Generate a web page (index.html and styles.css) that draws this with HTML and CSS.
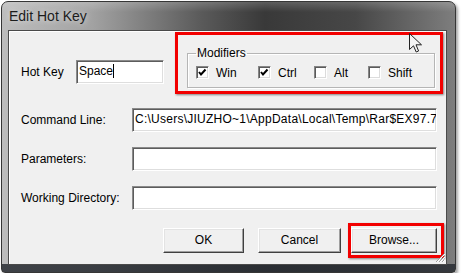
FILE: index.html
```html
<!DOCTYPE html>
<html lang="en">
<head>
  <meta charset="UTF-8">
  <meta name="viewport" content="width=device-width, initial-scale=1.0">
  <title>Edit Hot Key</title>
  <link rel="stylesheet" href="styles.css">
</head>
<body>
  <div class="window">
    <div class="titlebar">Edit Hot Key</div>
    <div class="client">
      <div class="top-row">
        <div class="hotkey-field">
          <label class="hotkey-label">Hot Key</label>
          <div class="field hotkey-input">Space<span class="caret"></span></div>
        </div>
        <div class="mark modifiers-mark">
          <fieldset class="modifiers">
            <legend>Modifiers</legend>
            <div class="check-row">
              <span class="check-item">
                <span class="box"><svg width="11" height="11" viewBox="0 0 11 11"><path d="M2 5 L4 7.5 L8.5 2.5" fill="none" stroke="#000" stroke-width="2"/></svg></span>Win
              </span>
              <span class="check-item">
                <span class="box"><svg width="11" height="11" viewBox="0 0 11 11"><path d="M2 5 L4 7.5 L8.5 2.5" fill="none" stroke="#000" stroke-width="2"/></svg></span>Ctrl
              </span>
              <span class="check-item"><span class="box"></span>Alt</span>
              <span class="check-item"><span class="box"></span>Shift</span>
            </div>
          </fieldset>
        </div>
      </div>

      <div class="fields">
        <label>Command Line:</label>
        <div class="field path">C:\Users\JIUZHO~1\AppData\Local\Temp\Rar$EX97.748\HotKeyP.exe</div>
        <label>Parameters:</label>
        <div class="field"></div>
        <label>Working Directory:</label>
        <div class="field"></div>
      </div>

      <div class="buttons">
        <div class="button ok-btn">OK</div>
        <div class="button cancel-btn">Cancel</div>
        <div class="mark browse-mark">
          <div class="button browse-btn">Browse...</div>
        </div>
      </div>

      <svg class="grip" width="10" height="10" viewBox="0 0 10 10">
        <path d="M9 1 L1 9 M9 4 L4 9 M9 7 L7 9" stroke="#a0a0a0" stroke-width="1"/>
        <path d="M10 1 L2 9 M10 4 L5 9 M10 7 L8 9" stroke="#fff" stroke-width="1"/>
      </svg>
    </div>
  </div>

  <svg class="cursor" width="14" height="21" viewBox="0 0 14 21">
    <path d="M0.5 0.5 L0.5 16.5 L4.5 12.8 L7.2 19 L9.6 18 L7 11.8 L12.5 11.8 Z" fill="#f4f4f4" stroke="#222" stroke-width="1" stroke-linejoin="round"/>
  </svg>
</body>
</html>
```

FILE: styles.css
```css
body {
  margin: 0;
  background: #fff;
  font-family: 'Liberation Sans', Arial, sans-serif;
  font-size: 12px;
  color: #000;
}

/* ---- window frame ---- */
.window {
  box-sizing: border-box;
  width: 455px;
  height: 272px;
  margin: 1px 0 0 1px;
  padding: 0 8px 7px 6px;
  border: 1px solid #363636;
  border-radius: 7px 7px 4px 4px;
  background:
    linear-gradient(to bottom, rgba(255,255,255,0.18), rgba(255,255,255,0) 10px),
    linear-gradient(to bottom, rgba(40,44,50,0) 262px, rgba(40,44,50,0.85) 262px),
    linear-gradient(to right, #bdbdbd, #a2a2a2 20%, #5a5a5a 44%, #393939 58%, #474747 78%, #7e7e7e 100%);
  box-shadow: 2px 2px 3px rgba(0, 0, 0, 0.35);
  display: flex;
  flex-direction: column;
}
.titlebar {
  height: 28px;
  line-height: 28px;
  padding-left: 1px;
  font-size: 14px;
  color: #1c1c1c;
  text-shadow: 0 0 6px rgba(255, 255, 255, 0.8);
}
.client {
  position: relative;
  flex: 1;
  background: #f0f0f0;
  border: 1px solid #4a4a4a;
  box-shadow: inset 1px 1px 0 #fff;
}

/* ---- red annotation boxes ---- */
.mark {
  box-sizing: border-box;
  border: 3px solid #f20000;
  box-shadow: 1px 1px 2px rgba(0, 0, 0, 0.45);
}

/* ---- top row ---- */
.top-row {
  display: flex;
  align-items: flex-start;
  padding: 1px 0 0 12px;
}
.hotkey-field {
  display: flex;
  align-items: center;
  margin-top: 28px;
}
.hotkey-label {
  width: 55px;
}
.hotkey-input {
  width: 88px;
}
.caret {
  display: inline-block;
  width: 1px;
  height: 14px;
  background: #000;
  vertical-align: -3px;
}
.modifiers-mark {
  width: 268px;
  height: 62px;
  margin-left: 11px;
}
.modifiers {
  margin: 11px 5px 0 9px;
  padding: 0 0 8px 8px;
  border: 1px solid #b5b5b5;
  box-shadow: 1px 1px 0 #fff, inset 1px 1px 0 #fff;
}
.modifiers legend {
  padding: 0 1px;
  line-height: 14px;
}
.check-row {
  display: grid;
  grid-template-columns: 62px 56px 54px auto;
  margin-top: 6px;
}
.check-item {
  display: flex;
  align-items: center;
  gap: 7px;
  height: 13px;
}
.box {
  box-sizing: border-box;
  width: 13px;
  height: 13px;
  display: flex;
  align-items: center;
  justify-content: center;
  background: #fff;
  border: 1px solid;
  border-color: #858585 #fff #fff #858585;
  box-shadow: inset 1px 1px 0 #5a5a5a, inset -1px -1px 0 #dcdcdc;
}

/* ---- text fields ---- */
.fields {
  display: grid;
  grid-template-columns: 111px 305px;
  row-gap: 15px;
  align-items: center;
  margin: 14px 0 0 12px;
}
.field {
  box-sizing: border-box;
  height: 24px;
  padding: 0 2px;
  line-height: 21px;
  background: #fff;
  white-space: nowrap;
  overflow: hidden;
  border: 1px solid;
  border-color: #8a8a8a #fff #fff #8a8a8a;
  box-shadow: inset 1px 1px 0 #5c5c5c, inset -1px -1px 0 #dedede;
}
.path {
  letter-spacing: 0.25px;
}

/* ---- buttons ---- */
.buttons {
  display: flex;
  justify-content: flex-end;
  align-items: center;
  margin-top: 13px;
  padding-right: 2px;
}
.button {
  box-sizing: border-box;
  height: 25px;
  line-height: 22px;
  text-align: center;
  background: #f0f0f0;
  border: 1px solid;
  border-color: #fff #404040 #404040 #fff;
  box-shadow: inset -1px -1px 0 #a0a0a0, inset 1px 1px 0 #e3e3e3;
}
.ok-btn {
  width: 81px;
  margin-right: 14px;
}
.cancel-btn {
  width: 83px;
  margin-right: 7px;
}
.browse-mark {
  padding: 2px 4px 2px 0;
}
.browse-btn {
  width: 86px;
}

.grip {
  position: absolute;
  right: 1px;
  bottom: 1px;
}
.cursor {
  position: absolute;
  left: 409px;
  top: 33px;
}
```
